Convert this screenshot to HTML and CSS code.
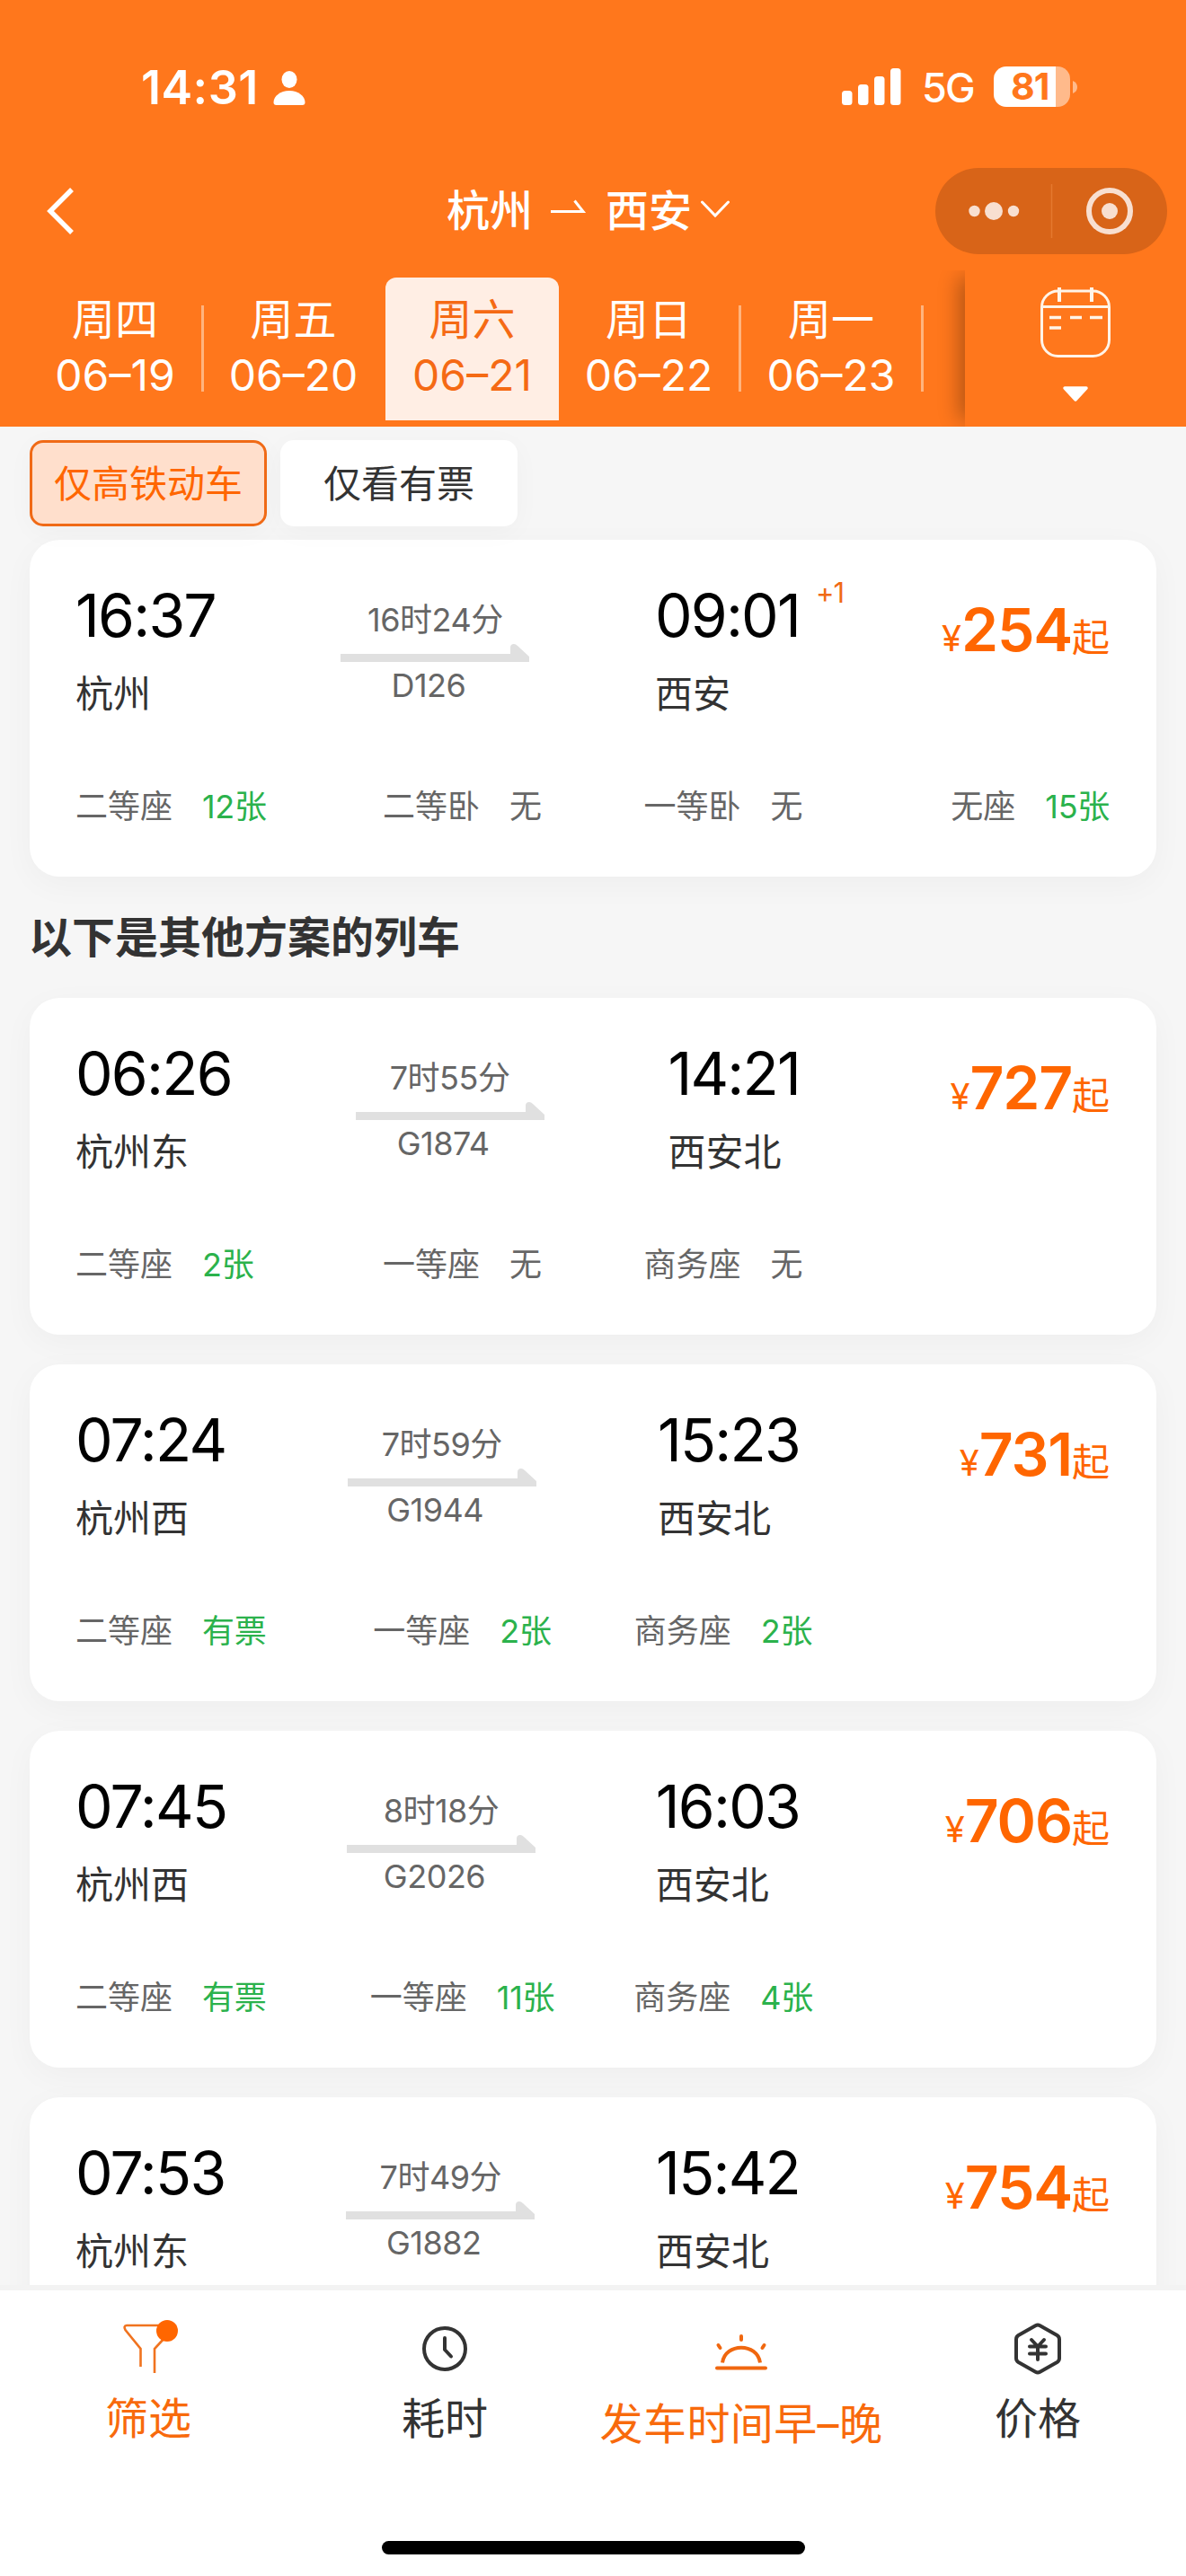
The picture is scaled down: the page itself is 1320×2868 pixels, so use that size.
FILE: index.html
```html
<!DOCTYPE html>
<html lang="zh-CN">
<head>
<meta charset="utf-8">
<title>杭州 - 西安</title>
<link rel="stylesheet" href="styles.css">
</head>
<body>
<svg class="defs" width="0" height="0">
  <symbol id="route-arrow" viewBox="0 0 210 20"><path d="M0 11H189V4Q189 0 193 0Q195 0 197 2L210 14V20H0Z" fill="#e0e0e0"/></symbol>
</svg>
<header class="header">
  <div class="status">
    <div class="status-left">
      <span class="clock">14:31</span>
      <svg class="person" width="36" height="38" viewBox="0 0 36 38" fill="#fff"><ellipse cx="18" cy="9.500" rx="8.500" ry="9.500"/><path d="M18 22C28 22 35.500 28 35.500 35Q35.500 38 32.500 38H3.500Q0.500 38 0.500 35C0.500 28 8 22 18 22Z"/></svg>
    </div>
    <div class="status-right">
      <svg width="66" height="41" viewBox="0 0 66 41" fill="#fff"><rect x="0" y="25" width="11.500" height="16" rx="3.500"/><rect x="18" y="18" width="11.500" height="23" rx="3.500"/><rect x="36" y="9" width="11.500" height="32" rx="3.500"/><rect x="54" y="0" width="11.500" height="41" rx="3.500"/></svg>
      <span class="net">5G</span>
      <div class="battery"><span class="battery-level">81</span></div>
      <svg class="nub" width="5" height="14" viewBox="0 0 5 14"><path d="M0 0Q5 2 5 7T0 14Z" fill="#ffba8b"/></svg>
    </div>
  </div>
  <nav class="nav">
    <svg class="back" width="32" height="52" viewBox="0 0 32 52"><path d="M29 2L5 26L29 50" fill="none" stroke="#fff" stroke-width="5.500"/></svg>
    <div class="title">
      <span>杭州</span>
      <svg class="title-arrow" width="40" height="16" viewBox="0 0 40 16"><path d="M0 13.500H36L26.500 1.500" fill="none" stroke="#fff" stroke-width="3"/></svg>
      <span>西安</span>
      <svg class="title-caret" width="32" height="20" viewBox="0 0 32 20"><path d="M1.500 2L16 17L30.500 2" fill="none" stroke="#fff" stroke-width="3" stroke-linecap="round"/></svg>
    </div>
    <div class="capsule">
      <svg width="258" height="96" viewBox="0 0 258 96" fill="#f8dfd0"><circle cx="43.500" cy="48" r="6.200"/><circle cx="65" cy="48" r="10"/><circle cx="87" cy="48" r="6.200"/><path d="M129.500 18V78" stroke="#e5782f" stroke-width="1.500"/><circle cx="194" cy="48" r="9"/><circle cx="194" cy="48" r="23" fill="none" stroke="#f8dfd0" stroke-width="6"/></svg>
    </div>
  </nav>
  <div class="dates">
    <div class="date"><span>周四</span><span class="day">06–19</span></div>
    <i class="sep"></i>
    <div class="date second"><span>周五</span><span class="day">06–20</span></div>
    <div class="date active"><span>周六</span><span class="day">06–21</span></div>
    <div class="date wide"><span>周日</span><span class="day">06–22</span></div>
    <i class="sep"></i>
    <div class="date wide last"><span>周一</span><span class="day">06–23</span></div>
    <i class="sep"></i>
    <div class="calendar">
      <svg width="80" height="80" viewBox="0 0 80 80" fill="none" stroke="#fff4e8" stroke-width="3"><rect x="2.500" y="5" width="75" height="72.500" rx="18"/><path d="M2 22.500H78"/><path d="M22 1V17M58 1V17" stroke-width="4"/><path d="M11 34.500H24M34 34.500H47M56 34.500H70M11 46H24" stroke-width="3.500"/></svg>
      <svg class="drop" width="30" height="18" viewBox="0 0 30 18"><path d="M3 2H27L15 15Z" fill="#fff" stroke="#fff" stroke-width="3.500" stroke-linejoin="round"/></svg>
    </div>
  </div>
</header>

<main class="list">
  <div class="chips">
    <div class="chip on">仅高铁动车</div>
    <div class="chip">仅看有票</div>
  </div>

  <article class="card">
    <div class="trip">
      <div class="route">
        <div class="stop"><div class="time">16:37</div><div class="station">杭州</div></div>
        <div class="leg"><div class="dur">16时24分</div><svg class="line"><use href="#route-arrow"/></svg><div class="no">D126</div></div>
        <div class="stop"><div class="time">09:01<sup class="plus">+1</sup></div><div class="station">西安</div></div>
      </div>
      <div class="price"><span class="yen">¥</span><b>254</b><span class="from">起</span></div>
    </div>
    <div class="seats">
      <div>二等座<span class="ok">12张</span></div><div>二等卧<span>无</span></div><div>一等卧<span>无</span></div><div>无座<span class="ok">15张</span></div>
    </div>
  </article>

  <h2 class="heading">以下是其他方案的列车</h2>

  <article class="card">
    <div class="trip">
      <div class="route">
        <div class="stop"><div class="time">06:26</div><div class="station">杭州东</div></div>
        <div class="leg"><div class="dur">7时55分</div><svg class="line"><use href="#route-arrow"/></svg><div class="no">G1874</div></div>
        <div class="stop"><div class="time">14:21</div><div class="station">西安北</div></div>
      </div>
      <div class="price"><span class="yen">¥</span><b>727</b><span class="from">起</span></div>
    </div>
    <div class="seats">
      <div>二等座<span class="ok">2张</span></div><div>一等座<span>无</span></div><div>商务座<span>无</span></div>
    </div>
  </article>

  <article class="card">
    <div class="trip">
      <div class="route">
        <div class="stop"><div class="time">07:24</div><div class="station">杭州西</div></div>
        <div class="leg"><div class="dur">7时59分</div><svg class="line"><use href="#route-arrow"/></svg><div class="no">G1944</div></div>
        <div class="stop"><div class="time">15:23</div><div class="station">西安北</div></div>
      </div>
      <div class="price"><span class="yen">¥</span><b>731</b><span class="from">起</span></div>
    </div>
    <div class="seats">
      <div>二等座<span class="ok">有票</span></div><div>一等座<span class="ok">2张</span></div><div>商务座<span class="ok">2张</span></div>
    </div>
  </article>

  <article class="card">
    <div class="trip">
      <div class="route">
        <div class="stop"><div class="time">07:45</div><div class="station">杭州西</div></div>
        <div class="leg"><div class="dur">8时18分</div><svg class="line"><use href="#route-arrow"/></svg><div class="no">G2026</div></div>
        <div class="stop"><div class="time">16:03</div><div class="station">西安北</div></div>
      </div>
      <div class="price"><span class="yen">¥</span><b>706</b><span class="from">起</span></div>
    </div>
    <div class="seats">
      <div>二等座<span class="ok">有票</span></div><div>一等座<span class="ok">11张</span></div><div>商务座<span class="ok">4张</span></div>
    </div>
  </article>

  <article class="card">
    <div class="trip">
      <div class="route">
        <div class="stop"><div class="time">07:53</div><div class="station">杭州东</div></div>
        <div class="leg"><div class="dur">7时49分</div><svg class="line"><use href="#route-arrow"/></svg><div class="no">G1882</div></div>
        <div class="stop"><div class="time">15:42</div><div class="station">西安北</div></div>
      </div>
      <div class="price"><span class="yen">¥</span><b>754</b><span class="from">起</span></div>
    </div>
  </article>
</main>

<footer class="footer">
  <div class="tabs">
    <div class="tab hot">
      <svg width="66" height="66" viewBox="0 0 66 66" fill="none" stroke="#f0731f" stroke-width="2.600"><path d="M24.500 53V33L7.500 12Q5 7.500 9 7H48M40 60V33L52 20"/><circle cx="54" cy="13" r="12" fill="#f60" stroke="none"/></svg>
      <span>筛选</span>
    </div>
    <div class="tab">
      <svg width="66" height="66" viewBox="0 0 66 66" fill="none" stroke="#333" stroke-width="4"><circle cx="33" cy="33" r="23"/><path d="M33 21V34L40 41.500" stroke-linecap="round" stroke-linejoin="round"/></svg>
      <span>耗时</span>
    </div>
    <div class="tab hot sort">
      <svg width="66" height="66" viewBox="0 0 66 66" fill="none" stroke="#f0670f" stroke-width="4" stroke-linecap="round"><path d="M6 54.500H60M33 19V23M7.500 29L9.500 32M58.500 29L56.500 32"/><path d="M12 48.500C15 26 51 26 54 48.500" stroke-linecap="butt"/></svg>
      <span>发车时间早–晚</span>
    </div>
    <div class="tab">
      <svg width="66" height="66" viewBox="0 0 66 66" fill="none" stroke="#333" stroke-width="4" stroke-linecap="round" stroke-linejoin="round"><path d="M30.500 7.200Q33 5.800 35.500 7.200L54.500 18Q57 19.500 57 22.500V43.500Q57 46.500 54.500 48L35.500 58.800Q33 60.200 30.500 58.800L11.500 48Q9 46.500 9 43.500V22.500Q9 19.500 11.500 18Z"/><path d="M26 23L33 30.500L40 23M24 30.500H42M24 38.500H42M33 30.500V45"/></svg>
      <span>价格</span>
    </div>
  </div>
  <div class="home"></div>
</footer>
</body>
</html>
```
FILE: styles.css
```css
* { box-sizing: border-box; margin: 0; padding: 0; }

body {
  width: 1320px;
  height: 2868px;
  display: flex;
  flex-direction: column;
  overflow: hidden;
  background: #f6f6f6;
  color: #333;
  font-family: Inter, "Noto Sans CJK SC", sans-serif;
}

svg { display: block; flex: none; }
.defs { position: absolute; }

/* header */
.header { height: 475px; flex: none; background: #ff771c; color: #fff; }
.status {
  height: 187px;
  padding: 9px 121px 0 157px;
  display: flex;
  justify-content: space-between;
  align-items: center;
}
.status-left, .status-right { display: flex; align-items: center; }
.clock { font-size: 52px; font-weight: 600; line-height: 60px; letter-spacing: 0.500px; }
.person { margin-left: 16px; }
.status-right svg:first-child { margin-top: -3px; }
.net { margin-left: 23px; font-size: 45px; font-weight: 500; line-height: 60px; letter-spacing: -1.700px; }
.battery {
  width: 85px;
  height: 45px;
  margin: -3px 3px 0 22px;
  border-radius: 14px;
  background: linear-gradient(90deg, #fff 69px, #ffba8b 69px);
}
.battery-level {
  display: block;
  padding-left: 19px;
  color: #ff771c;
  font-size: 41px;
  font-weight: 700;
  line-height: 45px;
  letter-spacing: -1px;
}
.nub { margin-top: -3px; }

.nav { height: 96px; display: flex; align-items: center; padding: 0 21px 0 51px; }
.title {
  margin-left: 414px;
  display: flex;
  align-items: center;
  font-size: 48px;
  font-weight: 500;
  line-height: 60px;
}
.title-arrow { margin: -10px 21px 0 20px; }
.title-caret { margin: -4px 0 0 10px; }
.capsule { width: 258px; height: 96px; margin-left: auto; border-radius: 48px; background: #d86418; }

.dates { height: 174px; margin-top: 18px; padding: 8px 0 0 32px; display: flex; overflow: hidden; }
.date {
  width: 192px;
  height: 159px;
  padding-top: 16px;
  display: flex;
  flex-direction: column;
  align-items: center;
  font-size: 48px;
  line-height: 61px;
}
.day { line-height: 64px; }
.second { width: 199px; margin-right: 3px; }
.active { width: 193px; border-radius: 12px 12px 0 0; background: #ffeee4; color: #f56a14; }
.wide { width: 200px; }
.sep { width: 3px; height: 96px; margin-top: 31px; background: #ffb47e; }
.calendar {
  width: 246px;
  height: 174px;
  margin: -8px 0 0 auto;
  padding-top: 18px;
  display: flex;
  flex-direction: column;
  align-items: center;
  background: #ff771c;
  box-shadow: -14px 0 22px -8px rgba(0, 0, 0, .3);
}
.drop { margin-top: 31px; }

/* results */
.list { height: 2075px; flex: none; padding: 15px 33px 0; overflow: hidden; border-bottom: 6px solid #f3f3f3; }
.chips { display: flex; gap: 15px; }
.chip {
  width: 264px;
  height: 96px;
  border-radius: 15px;
  background: #fff;
  box-shadow: 0 6px 30px rgba(0, 0, 0, .03);
  text-align: center;
  font-size: 42px;
  line-height: 97px;
}
.chip.on { border: 3px solid #f06a16; background: #ffdfcc; color: #f60; line-height: 91px; }

.card {
  height: 375px;
  margin-top: 15px;
  padding: 42px 52px 0 51px;
  border-radius: 33px;
  background: #fff;
  box-shadow: 0 9px 36px rgba(0, 0, 0, .035);
}
.card + .card { margin-top: 33px; }
.heading { height: 60px; margin: 38px 0 37px -1px; font-size: 48px; font-weight: 700; line-height: 60px; }
.heading + .card { margin-top: 0; }

.trip { display: flex; justify-content: space-between; height: 159px; }
.route { width: 806px; display: flex; justify-content: space-between; }
.time { position: relative; color: #000; font-size: 66px; line-height: 84px; letter-spacing: -1.800px; }
.plus { position: absolute; left: 100%; top: 1px; margin-left: 18px; color: #f06a16; font-size: 31px; line-height: 32px; letter-spacing: -1px; }
.station { margin-top: 16px; font-size: 42px; line-height: 60px; white-space: nowrap; }
.leg { width: 210px; padding-top: 22px; text-align: center; color: #666; font-size: 36px; line-height: 50px; letter-spacing: -0.500px; }
.line { width: 210px; height: 20px; margin-top: 2px; }
.no { margin: 1px 15px 0 0; }
.price { height: 84px; margin-top: 16px; display: flex; align-items: baseline; color: #f60; }
.price b { font-size: 66px; font-weight: 600; line-height: 84px; letter-spacing: -1.200px; }
.yen { font-size: 40px; line-height: 1; }
.from { font-size: 42px; line-height: 1; }

.seats { margin-top: 66px; display: grid; grid-template-columns: 286px 289px 292px 1fr; font-size: 36px; line-height: 60px; color: #666; text-align: center; }
.seats div:first-child { text-align: left; }
.seats div:nth-child(4) { text-align: right; }
.seats span { margin-left: 33px; }
.seats .ok { color: #2bb24c; letter-spacing: -0.300px; }

/* bottom sorting bar */
.footer { height: 318px; flex: none; background: #fff; }
.tabs { height: 279px; padding-top: 32px; display: grid; grid-template-columns: repeat(4, 330px); }
.tab { display: flex; flex-direction: column; align-items: center; font-size: 48px; line-height: 60px; white-space: nowrap; }
.tab span { margin-top: 15px; }
.sort span { margin-top: 21px; letter-spacing: 0.400px; }
.hot { color: #f86a0c; }
.home { width: 471px; height: 15px; margin: 0 auto; border-radius: 8px; background: #000; }
```
